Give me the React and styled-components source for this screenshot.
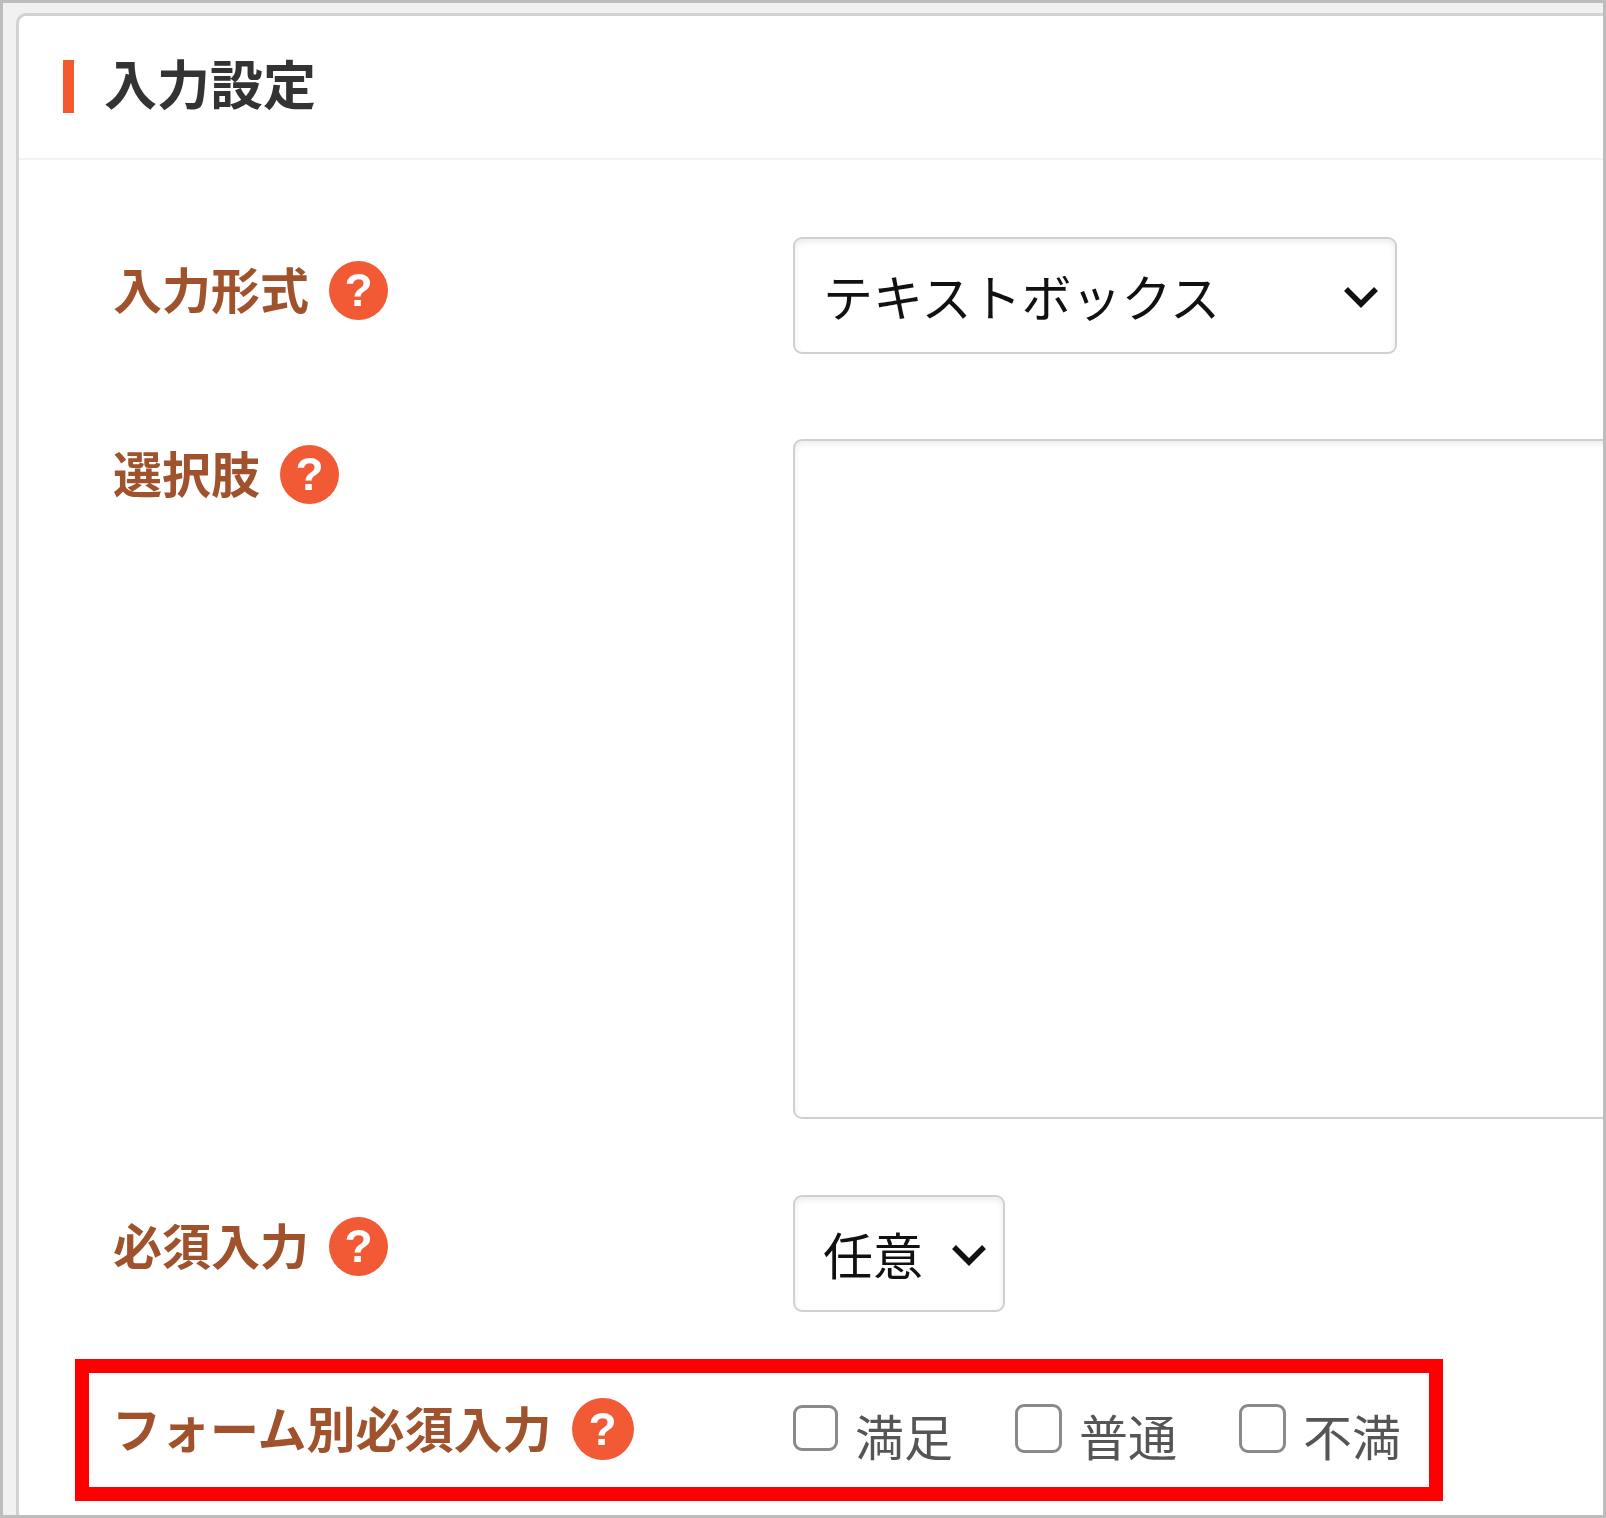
import React from "react";
import styled, { createGlobalStyle, css } from "styled-components";

const GlobalStyle = createGlobalStyle`
    html, body {
        margin: 0;
        padding: 0;
        background: #fff;
    }
    * {
        box-sizing: border-box;
    }
`
// the text of the picture is slightly soft
const soft = css`
    filter: blur(0.45px);
`
const Frame = styled.div`
    width: 1606px;
    height: 1518px;
    border: 3px solid #bdbdbd;
    background: #f1f1f1;
    padding: 10px 0 0 13px;
    overflow: hidden;
    font-family: "Noto Sans CJK JP", "Noto Sans", sans-serif;
`
const Panel = styled.section`
    width: 1640px;
    height: 1502px;
    background: #fff;
    border: 3px solid #d2d2d2;
    border-right: none;
    border-bottom: none;
    border-radius: 10px 0 0 0;
`
const Heading = styled.h2`
    display: flex;
    align-items: center;
    gap: 30px;
    height: 144px;
    margin: 0;
    padding: 0 0 2px 44px;
    border-bottom: 2px solid #f2f2f2;
    color: #333;
    font-size: 53px;
    font-weight: 700;
    line-height: 1;

    &::before {
        content: "";
        width: 11px;
        height: 53px;
        background: #f4582f;
    }
`
const HeadingText = styled.span`
    margin-bottom: 8px;
    ${soft}
`
const Body = styled.div`
    padding: 77px 0 0 94px;
`
const Row = styled.div`
    display: grid;
    grid-template-columns: 680px 1fr;
    margin-bottom: ${(p) => p.$gap}px;
`
const Highlight = styled.div`
    display: grid;
    grid-template-columns: 681px 1fr;
    align-items: center;
    width: 1368px;
    height: 142px;
    margin-left: -38px;
    padding-left: 23px;
    border: 14px solid #ff0000;
`
const Label = styled.label`
    display: flex;
    align-items: center;
    gap: ${(p) => p.$gap || 20}px;
    height: ${(p) => p.$height || 100}px;
    margin-bottom: ${(p) => p.$lift || 0}px;
    color: #a0522d;
    font-size: 49px;
    font-weight: 700;
    line-height: 1;
    white-space: nowrap;
`
const LabelText = styled.span`
    ${soft}
`
const Help = styled.span`
    display: flex;
    align-items: center;
    justify-content: center;
    width: ${(p) => p.$size || 59}px;
    height: ${(p) => p.$size || 59}px;
    margin-top: 6px;
    border-radius: 50%;
    background: #f25a35;
    color: #fff;
    font-family: "Liberation Sans", sans-serif;
    font-size: 46px;
    font-weight: 700;
    ${soft}
`
const SelectWrap = styled.div`
    position: relative;
    width: ${(p) => p.$width}px;
    height: 117px;
`
const Select = styled.select`
    appearance: none;
    display: block;
    width: 100%;
    height: 100%;
    padding: 0 0 2px 28px;
    border: 2px solid #d0d0d0;
    border-radius: 9px;
    background: #fff;
    box-shadow: inset 0 3px 6px rgba(0, 0, 0, 0.08);
    color: #111;
    font-family: inherit;
    font-size: 50px;
    font-weight: 400;
`
const Chevron = styled.svg`
    position: absolute;
    right: 18px;
    top: 49px;
    width: 36px;
    height: 22px;
    fill: none;
    stroke: #111;
    stroke-width: 5.5;
    pointer-events: none;
`
const TextArea = styled.textarea`
    display: block;
    width: 900px;
    height: 680px;
    border: 2px solid #d0d0d0;
    border-radius: 9px;
    background: #fff;
    box-shadow: inset 0 3px 6px rgba(0, 0, 0, 0.08);
    resize: none;
    outline: none;
`
const Choices = styled.div`
    display: flex;
    align-items: center;
    margin-top: 8px;
`
const Choice = styled.label`
    display: flex;
    align-items: center;
    gap: 17px;
    width: ${(p) => p.$width}px;
    color: #555;
    font-size: 49px;
    line-height: 1;
`
const Check = styled.input`
    appearance: none;
    flex: none;
    width: ${(p) => (p.$big ? 47 : 45)}px;
    height: ${(p) => (p.$big ? 49 : 46)}px;
    margin: -12px 0 0;
    border: 3px solid #8a8a8a;
    border-radius: 9px;
    background: #fff;
    ${soft}
`

const FieldLabel = ({ text, height, lift, gap, badge }) => (
    <Label $height={height} $lift={lift} $gap={gap}>
        <LabelText>{text}</LabelText>
        <Help $size={badge}>?</Help>
    </Label>
)

const Dropdown = ({ width, value }) => (
    <SelectWrap $width={width}>
        <Select defaultValue={value}>
            <option>{value}</option>
        </Select>
        <Chevron viewBox="0 0 36 22">
            <path d="M3 3 L18 18 L33 3" />
        </Chevron>
    </SelectWrap>
)

const App = () => {
    return (
        <>
            <GlobalStyle />
            <Frame>
                <Panel>
                    <Heading><HeadingText>入力設定</HeadingText></Heading>
                    <Body>
                        <Row $gap={85}>
                            <FieldLabel text="入力形式" />
                            <Dropdown width={604} value="テキストボックス" />
                        </Row>
                        <Row $gap={76}>
                            <FieldLabel text="選択肢" height={64} />
                            <TextArea />
                        </Row>
                        <Row $gap={47}>
                            <FieldLabel text="必須入力" height={96} />
                            <Dropdown width={212} value="任意" />
                        </Row>
                        <Highlight>
                            <FieldLabel text="フォーム別必須入力" lift={8} gap={20} badge={62} />
                            <Choices>
                                <Choice $width={222}><Check type="checkbox" />満足</Choice>
                                <Choice $width={224}><Check type="checkbox" $big />普通</Choice>
                                <Choice $width={170}><Check type="checkbox" $big />不満</Choice>
                            </Choices>
                        </Highlight>
                    </Body>
                </Panel>
            </Frame>
        </>
    )
}

export default App
